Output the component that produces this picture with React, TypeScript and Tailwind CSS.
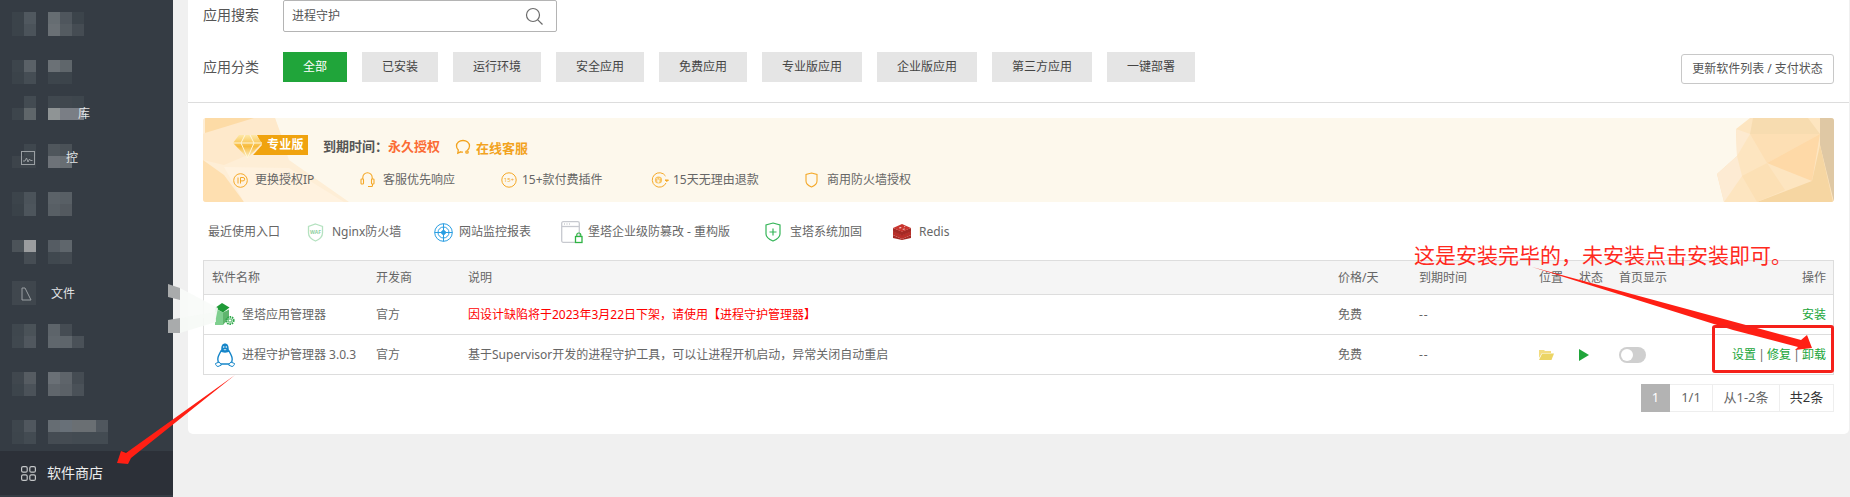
import React from "react";

type Item = { mt: number; rows: (string | null)[][]; glyph?: string; gx?: number; gy?: number; over?: boolean; icon?: React.ReactNode };

const n = null;
const items: Item[] = [
  { mt: 12, rows: [["#3b434a", "#50585f", n, "#666d72", "#4f565d", "#3c444b"], ["#3b434a", "#4b535a", n, "#6a7075", "#545b61", "#454c53"]] },
  { mt: 24, rows: [["#3d454c", "#5a6167", n, "#6b7176", "#5f666b", n], ["#3b434a", "#454d54", n, "#3d454c", "#3c444b", n]], glyph: "P", gx: 52, gy: -2 },
  { mt: 12, rows: [[n, "#434b52", n, "#40484f", "#40474e", "#3e464d"], ["#3d454c", "#5f666a", n, "#8f9495", "#7a7e85", "#7a7e85"]], glyph: "库", gx: 66, gy: 10, over: true },
  {
    mt: 24,
    rows: [[n, "#3f474e", n, "#4f565c", "#4a5157", n], ["#3d444b", "#3d444b", n, "#6d7278", "#686e73", n]],
    glyph: "控",
    gx: 54,
    gy: 6,
    over: true,
    icon: (
      <svg width="15" height="15" viewBox="0 0 15 15" fill="none" stroke="#9a9fa3" strokeWidth="1" className="absolute left-[9px] top-[7px]">
        <rect x="0.5" y="0.5" width="13" height="13" />
        <path d="M2 10h2l1.500-3 1.500 4 1.500-3 1 1.500h2" />
      </svg>
    ),
  },
  { mt: 24, rows: [["#3c444b", "#4b535a", n, "#5b6268", "#585f65", n], ["#3a4249", "#4d555c", n, "#585f65", "#53595f", n]] },
  { mt: 24, rows: [["#4c5359", "#9b9d9f", n, "#555c63", "#5f666c", n], [n, "#464d54", n, "#40484f", "#434a51", n]] },
  {
    mt: 17,
    rows: [["#40474e", "#3f464d", n, n, n, n], ["#40474e", "#3f464d", n, n, n, n]],
    glyph: "文件",
    gx: 39,
    gy: 5,
    icon: (
      <svg width="12" height="14" viewBox="0 0 12 14" fill="none" stroke="#9a9fa3" strokeWidth="1" className="absolute left-[9px] top-[6px]">
        <path d="M1 13V1h3l6 12z" />
      </svg>
    ),
  },
  { mt: 19, rows: [["#3f474e", "#4a5258", n, "#5d646a", "#454c53", n], ["#40484f", "#50575e", n, "#60676d", "#5e656b", "#4a5158"]] },
  { mt: 24, rows: [["#40474e", "#565c62", n, "#6a7076", "#5e646a", "#454c53"], ["#3d454c", "#4b5259", n, "#60666c", "#5b6167", "#4a5158"]] },
  { mt: 24, rows: [["#3e464d", "#50575e", n, "#666d73", "#687078", "#6a6f73", "#6a6f73", "#50575e"], ["#3d454c", "#434b52", n, "#454c53", "#454c53", "#434b52", "#434b52", "#434b52"]] },
];

const categories = [
  ["全部", "w-[64px]"],
  ["已安装", "w-[76px]"],
  ["运行环境", "w-[88px]"],
  ["安全应用", "w-[88px]"],
  ["免费应用", "w-[88px]"],
  ["专业版应用", "w-[100px]"],
  ["企业版应用", "w-[100px]"],
  ["第三方应用", "w-[100px]"],
  ["一键部署", "w-[88px]"],
];

const IpIcon = () => (
  <svg width="15" height="15" viewBox="0 0 15 15" fill="none" stroke="#f4a828" strokeWidth="1">
    <circle cx="7.500" cy="7.500" r="6.800" />
    <path d="M5 4.500v6M7.500 10.500v-6H10a1.700 1.700 0 0 1 0 3.400H7.500" />
  </svg>
);
const HeadIcon = () => (
  <svg width="15" height="16" viewBox="0 0 15 16" fill="none" stroke="#f4a828" strokeWidth="1.100">
    <path d="M2.800 7V5.500a4.700 4.700 0 0 1 9.400 0V7" />
    <rect x="1" y="7" width="2.500" height="5" rx="0.800" />
    <rect x="11.500" y="7" width="2.500" height="5" rx="0.800" />
    <path d="M12.500 12v1.500a1 1 0 0 1-1 1H8" />
  </svg>
);
const Plus15 = () => (
  <svg width="16" height="16" viewBox="0 0 16 16" fill="none">
    <circle cx="8" cy="8" r="7.200" stroke="#f4a828" strokeWidth="1" />
    <text x="8" y="10" fontSize="6" textAnchor="middle" fill="#f4a828">15+</text>
  </svg>
);
const RefundIcon = () => (
  <svg width="18" height="18" viewBox="0 0 18 18" fill="none" stroke="#f4a828" strokeWidth="1">
    <path d="M14.500 5A7.200 7.200 0 1 0 15 12" />
    <path d="M14 9l2 1.500L17.500 9z" fill="#f4a828" />
    <circle cx="7.500" cy="9" r="3.600" fill="#f9c35e" stroke="none" />
    <text x="7.500" y="11.500" fontSize="7" textAnchor="middle" fill="#fff" stroke="none">¥</text>
  </svg>
);
const SmallShield = () => (
  <svg width="13" height="16" viewBox="0 0 13 16" fill="none" stroke="#f4a828" strokeWidth="1.100">
    <path d="M6.500 1L12 2.500V9c0 3-3 5-5.500 6C4 14 1 12 1 9V2.500z" />
  </svg>
);

const WafIcon = () => (
  <svg width="17" height="19" viewBox="0 0 17 19" fill="none">
    <path d="M8.500 1l7 2.500V10c0 4-3.500 6.500-7 8-3.500-1.500-7-4-7-8V3.500z" stroke="#b5e2c0" strokeWidth="1.300" />
    <text x="8.500" y="10.500" fontSize="5" fontWeight="700" textAnchor="middle" fill="#8fcf9f">WAF</text>
  </svg>
);
const RadarIcon = () => (
  <svg width="19" height="19" viewBox="0 0 19 19" fill="none" stroke="#2a9ee2" strokeWidth="1">
    <circle cx="9.500" cy="9.500" r="8.800" />
    <circle cx="9.500" cy="9.500" r="5.500" />
    <circle cx="9.500" cy="9.500" r="2" fill="#2a9ee2" />
    <path d="M0.500 9.500h18M9.500 0.500v18" />
  </svg>
);
const WindowLock = () => (
  <svg width="23" height="23" viewBox="0 0 23 23" fill="none">
    <rect x="0.700" y="0.700" width="17.600" height="20.600" rx="1.500" stroke="#c7c9cf" strokeWidth="1.300" fill="#fff" />
    <path d="M1 5.500h17" stroke="#c7c9cf" strokeWidth="1.300" />
    <path d="M3 3h1M5.500 3h1M8 3h1" stroke="#b0b3b8" strokeWidth="1" />
    <rect x="14.500" y="15.500" width="6.500" height="6" stroke="#2fb344" strokeWidth="1.300" fill="#fff" />
    <path d="M15.800 15.500v-1.500a2 2 0 0 1 4 0v1.500" stroke="#2fb344" strokeWidth="1.200" />
  </svg>
);
const GreenShield = () => (
  <svg width="16" height="20" viewBox="0 0 16 20" fill="none" stroke="#35b558" strokeWidth="1.200">
    <path d="M8 1l7 2v9c0 3-3.500 5.500-7 7-3.500-1.500-7-4-7-7V3z" />
    <path d="M8 6.500v7M4.500 10h7" />
  </svg>
);
const Redis = () => (
  <svg width="18" height="16" viewBox="0 0 18 16">
    <path d="M0 11l9 4 9-4v3l-9 2-9-2z" fill="#a42a25" />
    <path d="M0 7l9 4 9-4v4l-9 4-9-4z" fill="#b92f29" />
    <path d="M0 4l9 3.500L18 4v3.500l-9 4-9-4z" fill="#a42a25" />
    <path d="M9 0l9 4-9 3.800L0 4z" fill="#c9352e" />
    <path d="M6 3.500l2-.6.500 1-2 .6zM11 2l1.500.5-1 .8zM9.500 5l2-.5.500.8-2 .4z" fill="#f3d6d3" />
  </svg>
);
const GreenBox = () => (
  <svg width="20" height="23" viewBox="0 0 20 23">
    <path d="M0 5.500L8 9.500V22H0z" fill="#7fcf8f" />
    <path d="M8 9.500L14 6.500V15L8 22z" fill="#5fb56d" />
    <path d="M7 0l7.500 4.500L8 9.500 0 5z" fill="#1f9a37" />
    <circle cx="15" cy="17.500" r="3.600" fill="none" stroke="#2fa94a" strokeWidth="2" strokeDasharray="1.500 0.800" />
    <circle cx="15" cy="17.500" r="1.700" fill="none" stroke="#2fa94a" strokeWidth="0.900" />
  </svg>
);
const Tux = () => (
  <svg width="22" height="24" viewBox="0 0 22 24" fill="none">
    <path d="M11 0.500c2.600 0 3.700 2.300 3.700 5 0 1 .3 1.800 .9 2.800L11 9.500 6.400 8.300c.6-1 .9-1.800 .9-2.800 0-2.700 1.100-5 3.700-5z" fill="#1686c9" />
    <path d="M7 8c-1.500 2.500-3.200 5.200-3.200 8.200 0 2.300.7 3.800 1.700 4.800h11c1-1 1.700-2.500 1.700-4.800 0-3-1.700-5.700-3.200-8.200-1.500 1.300-6.500 1.300-8 0z" fill="#fff" stroke="#1686c9" strokeWidth="1.400" />
    <circle cx="9.700" cy="4" r="0.800" fill="#fff" />
    <circle cx="12.300" cy="4" r="0.800" fill="#fff" />
    <path d="M9.300 6.300h3.400L11 7.600z" fill="#e8f3fa" />
    <path d="M1.500 20.500l3.700-1.500 2.300 3-3.500 1.500c-1.300 0-2.700-1.900-2.500-3zM20.500 20.500l-3.700-1.500-2.300 3 3.500 1.500c1.300 0 2.700-1.900 2.500-3z" fill="#fff" stroke="#1686c9" strokeWidth="1" />
  </svg>
);

const cols = "grid grid-cols-[164px_92px_870px_81px_120px_40px_40px_80px_1fr] items-center pl-[8px] pr-[7px]";

export default function App() {
  return (
    <div className="relative flex w-[1850px] h-[497px] overflow-hidden bg-[#f0f0f0] text-[12px] text-[#666] font-['Noto_Sans','Noto_Sans_CJK_SC',sans-serif]">
      <aside className="flex flex-col w-[173px] h-full shrink-0 bg-[#353c44]">
        {items.map((it, i) => (
          <div key={i} className="relative ml-[12px] h-[24px]" style={{ marginTop: it.mt }}>
            {it.glyph && !it.over && (
              <span className="absolute text-[12px] leading-[16px] text-[#e2e4e6]" style={{ left: it.gx, top: it.gy }}>
                {it.glyph}
              </span>
            )}
            {it.rows.map((r, j) => (
              <div key={j} className="relative flex h-[12px]">
                {r.map((c, k) => (
                  <div key={k} className="w-[12px] h-[12px]" style={{ backgroundColor: c ?? "transparent" }} />
                ))}
              </div>
            ))}
            {it.glyph && it.over && (
              <span className="absolute text-[12px] leading-[16px] text-[#e2e4e6]" style={{ left: it.gx, top: it.gy }}>
                {it.glyph}
              </span>
            )}
            {it.icon}
          </div>
        ))}
        <div className="mt-auto mb-[2px] flex items-center h-[44px] bg-[#2c3038] pl-[21px] gap-[11px]">
          <svg width="15" height="15" viewBox="0 0 15 15" fill="none" stroke="#c4c6c8" strokeWidth="1.200">
            <rect x="0.600" y="0.600" width="5.600" height="5.600" rx="1.500" />
            <rect x="8.800" y="0.600" width="5.600" height="5.600" rx="1.500" />
            <rect x="0.600" y="8.800" width="5.600" height="5.600" rx="1.500" />
            <rect x="8.800" y="8.800" width="5.600" height="5.600" rx="1.500" />
          </svg>
          <span className="text-[14px] leading-[20px] text-[#eceded]">软件商店</span>
        </div>
      </aside>

      <main className="flex-1 pl-[15px] pr-[1px]">
        <div className="bg-white h-[434px] rounded-b-[5px]">
          <div className="px-[15px] h-[103px] border-b border-[#dddddd]">
            <div className="flex items-center h-[32px]">
              <span className="w-[80px] text-[14px] leading-[20px] text-[#555] -mt-[2px]">应用搜索</span>
              <div className="flex items-center justify-between w-[274px] h-[32px] border border-[#b4b4b4] rounded-[2px] pl-[8px] pr-[12px]">
                <span className="text-[12px] leading-[16px] text-[#555]">进程守护</span>
                <svg width="19" height="19" viewBox="0 0 19 19" fill="none" stroke="#6b6b6b" strokeWidth="1.200">
                  <circle cx="8" cy="8" r="6.500" />
                  <path d="M12.800 12.800l4.700 4.700" />
                </svg>
              </div>
            </div>
            <div className="flex items-center mt-[20px] h-[30px]">
              <span className="w-[80px] text-[14px] leading-[20px] text-[#555]">应用分类</span>
              <div className="flex gap-[15px]">
                {categories.map(([c, w], i) => (
                  <span key={c} className={`${w} h-[30px] flex items-center justify-center text-[12px] ${i === 0 ? "bg-[#20a53a] text-white" : "bg-[#e5e5e5] text-[#444]"}`}>
                    {c}
                  </span>
                ))}
              </div>
              <span className="ml-auto mt-[3px] flex items-center justify-center w-[153px] h-[30px] border border-[#c8c8c8] rounded-[3px] text-[12px] text-[#555]">
                更新软件列表 / 支付状态
              </span>
            </div>
          </div>

          <div className="px-[15px]">
            <div className="relative mt-[15px] h-[84px] rounded-[3px] bg-[#fdf8ec] overflow-hidden">
              <svg className="absolute left-0 top-0" width="150" height="84" viewBox="204 118 150 84">
                <path d="M204 118H276L290 160L350 202H204z" fill="#feeed6" />
                <path d="M204 134L240 118H276L284 140L225 165L204 160z" fill="#fee9cb" />
                <path d="M206 118H255L206 133z" fill="#fddba6" />
                <path d="M204 160L225 175L245 202H204z" fill="#fedfb0" />
                <path d="M225 167L290 168L345 202H245z" fill="#fff2df" />
              </svg>
              <svg className="absolute right-0 top-0" width="120" height="84" viewBox="1714 118 120 84">
                <path d="M1736 129L1750 118H1834V202H1724L1717 174L1737 156z" fill="#fde5c0" />
                <path d="M1820 118H1834V202L1820 145z" fill="#dfc8a4" />
                <path d="M1753 118H1808L1820 134H1750z" fill="#f7dcb0" />
                <path d="M1750 134H1820L1767 163z" fill="#fddfb4" />
                <path d="M1820 134L1812 181L1767 163z" fill="#fed9a7" />
                <path d="M1812 181L1820 145L1833 202H1757z" fill="#f6d6a2" />
                <path d="M1736 129L1750 134L1737 156z" fill="#fdead0" />
                <path d="M1717 174L1737 156L1742 176L1724 202z" fill="#fdebd3" />
                <path d="M1742 176L1767 163L1785 190L1757 202z" fill="#fce0b5" />
              </svg>

              <div className="relative pl-[30px]">
                <div className="flex items-center h-[24px] mt-[16px]">
                  <div className="relative w-[75px] h-[24px] shrink-0">
                    <svg className="absolute left-0 top-0" width="75" height="24" viewBox="0 0 75 24">
                      <defs>
                        <linearGradient id="gem" x1="0" y1="0" x2="0" y2="1">
                          <stop offset="0" stopColor="#fde8a8" />
                          <stop offset="0.500" stopColor="#f7bb3c" />
                          <stop offset="1" stopColor="#fdf3d0" />
                        </linearGradient>
                      </defs>
                      <path d="M24 1H75V21H20L29 11z" fill="#f0a30f" />
                      <path d="M6 1H23L29 9L14.500 24L0 9z" fill="url(#gem)" />
                      <path d="M0 9H29M8 9L14.500 24L21 9L17 1M8 9L12 1" stroke="#fff6dc" strokeWidth="1" fill="none" />
                    </svg>
                    <span className="absolute left-[34px] top-[1px] leading-[20px] text-[12px] font-bold tracking-[0.200px] text-white">专业版</span>
                  </div>
                  <span className="ml-[15px] text-[13px] font-bold leading-[18px] text-[#555]">到期时间：</span>
                  <span className="text-[13px] font-bold leading-[18px] text-[#fb6b34]">永久授权</span>
                  <svg className="ml-[15px] mt-[3px]" width="17" height="17" viewBox="0 0 17 17" fill="none" stroke="#f2a31e" strokeWidth="1.300">
                    <path d="M8 1.500c3.600 0 6.500 2.400 6.500 5.600 0 1.800-.9 3.300-2.200 4.300M8 1.500C4.400 1.500 1.500 3.900 1.500 7.100c0 1.500.7 3 1.800 4l-.5 3 3-1.300c.7.200 1.500.3 2.200.3" />
                    <circle cx="12" cy="13" r="1.200" />
                  </svg>
                  <span className="ml-[4px] mt-[4px] text-[13px] font-bold leading-[18px] text-[#f2a31e]">在线客服</span>
                </div>
                <div className="flex items-center h-[20px] mt-[12px]">
                  <div className="flex items-center gap-[7px] w-[127px]"><IpIcon /><span className="leading-[18px]">更换授权IP</span></div>
                  <div className="flex items-center gap-[8px] w-[141px]"><HeadIcon /><span className="leading-[18px]">客服优先响应</span></div>
                  <div className="flex items-center gap-[5px] w-[150px]"><Plus15 /><span className="leading-[18px]">15+款付费插件</span></div>
                  <div className="flex items-center gap-[4px] w-[154px]"><RefundIcon /><span className="leading-[18px]">15天无理由退款</span></div>
                  <div className="flex items-center gap-[9px]"><SmallShield /><span className="leading-[18px]">商用防火墙授权</span></div>
                </div>
              </div>
            </div>

            <div className="flex items-center h-[28px] mt-[16px] pl-[5px]">
              <span className="w-[99px] leading-[18px]">最近使用入口</span>
              <div className="flex items-center gap-[8px] w-[127px]"><WafIcon /><span className="leading-[18px]">Nginx防火墙</span></div>
              <div className="flex items-center gap-[6px] w-[127px]"><RadarIcon /><span className="leading-[18px]">网站监控报表</span></div>
              <div className="flex items-center gap-[4px] w-[204px]"><WindowLock /><span className="leading-[18px]">堡塔企业级防篡改 - 重构版</span></div>
              <div className="flex items-center gap-[9px] w-[128px]"><GreenShield /><span className="leading-[18px]">宝塔系统加固</span></div>
              <div className="flex items-center gap-[8px]"><Redis /><span className="leading-[18px]">Redis</span></div>
            </div>

            <div className="mt-[14px] border border-[#dddddd]">
              <div className={`${cols} h-[34px] bg-[#f5f5f5] border-b border-[#dddddd]`}>
                <span>软件名称</span>
                <span>开发商</span>
                <span>说明</span>
                <span>价格/天</span>
                <span>到期时间</span>
                <span>位置</span>
                <span>状态</span>
                <span>首页显示</span>
                <span className="text-right">操作</span>
              </div>
              <div className={`${cols} h-[40px] border-b border-[#dddddd]`}>
                <span className="flex items-center"><span className="w-[30px] pl-[3px] shrink-0"><GreenBox /></span>堡塔应用管理器</span>
                <span>官方</span>
                <span className="text-[#ff0000]">因设计缺陷将于2023年3月22日下架，请使用【进程守护管理器】</span>
                <span>免费</span>
                <span className="tracking-[1px]">--</span>
                <span />
                <span />
                <span />
                <span className="text-right text-[#20a53a]">安装</span>
              </div>
              <div className={`${cols} h-[39px]`}>
                <span className="flex items-center"><span className="w-[30px] pl-[2px] shrink-0"><Tux /></span>进程守护管理器 3.0.3</span>
                <span>官方</span>
                <span>基于Supervisor开发的进程守护工具，可以让进程开机启动，异常关闭自动重启</span>
                <span>免费</span>
                <span className="tracking-[1px]">--</span>
                <span>
                  <svg width="15" height="11" viewBox="0 0 15 11">
                    <path d="M0 2V1h5l1 1h6v2H3L0 9z" fill="#f3dc80" />
                    <path d="M3.200 4.500H15L12.500 11H0z" fill="#ecd565" />
                  </svg>
                </span>
                <span>
                  <svg width="10" height="12" viewBox="0 0 10 12"><path d="M0 0l10 6-10 6z" fill="#20a53a" /></svg>
                </span>
                <span>
                  <span className="flex items-center w-[27px] h-[16px] rounded-full bg-[#cfcfcf] pl-[2px]">
                    <span className="w-[12px] h-[12px] rounded-full bg-white" />
                  </span>
                </span>
                <span className="flex justify-end text-[#20a53a]">
                  设置<span className="w-[11px] text-center text-[#666]">|</span>修复<span className="w-[11px] text-center text-[#666]">|</span>卸载
                </span>
              </div>
            </div>

            <div className="flex justify-end mt-[9px] h-[28px] text-[13px]">
              <span className="flex items-center justify-center w-[29px] bg-[#b3b3b3] text-white">1</span>
              <span className="flex items-center justify-center w-[43px] border border-l-0 border-[#eeeeee]">1/1</span>
              <span className="flex items-center justify-center w-[67px] border border-l-0 border-[#eeeeee]">从1-2条</span>
              <span className="flex items-center justify-center w-[54px] border border-l-0 border-[#eeeeee] text-[#333]">共2条</span>
            </div>
          </div>
        </div>
      </main>

      <svg className="absolute left-0 top-0 pointer-events-none" width="1850" height="497" viewBox="0 0 1850 497">
        <path d="M180 288L218 308L216 318L180 318z" fill="#f8fbf8" opacity="0.900" />
        <path d="M180 318L216 312L216 322L180 333z" fill="#f6faf6" opacity="0.900" />
        <path d="M168 284L180 288V300L168 297z" fill="#a9abac" />
        <path d="M168 320L180 318V333H168z" fill="#a9abac" />
        <path d="M1532 267L1801 340L1807 335L1812 348L1795 350L1798 347L1733 330z" fill="#ff1f14" />
        <path d="M235 375L131 458L128 464L117 463L121 451L126 453z" fill="#ff1f14" />
      </svg>
      <div className="absolute left-[1712px] top-[325px] w-[122px] h-[48px] border-[3px] border-[#f5201a] rounded-[3px]" />
      <span className="absolute left-[1414px] top-[241px] text-[21px] leading-[28px] whitespace-nowrap text-[#ff2a1f]">这是安装完毕的，未安装点击安装即可。</span>
    </div>
  );
}
